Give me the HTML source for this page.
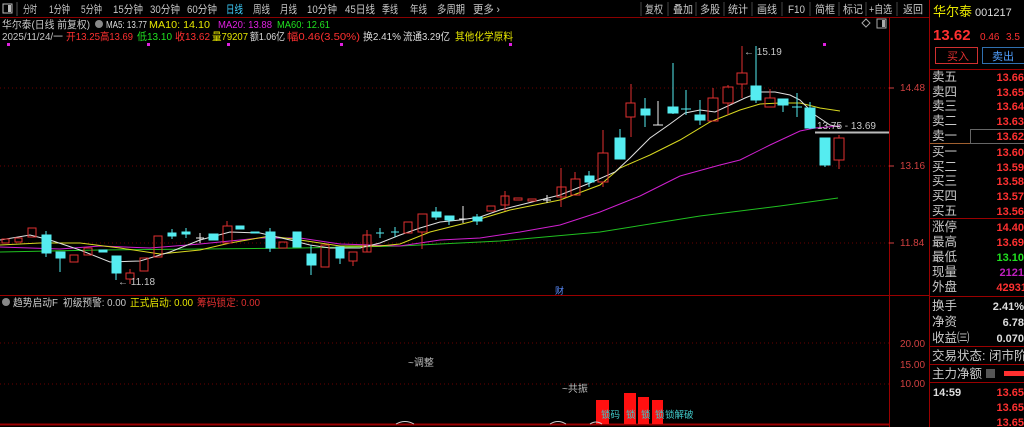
<!DOCTYPE html>
<html><head><meta charset="utf-8"><style>
html,body{margin:0;padding:0;background:#000;width:1024px;height:427px;overflow:hidden}
svg{display:block}
text{font-family:"Liberation Sans","Noto Sans CJK SC",sans-serif}
</style></head><body>
<svg width="1024" height="427" viewBox="0 0 1024 427" xmlns="http://www.w3.org/2000/svg">
<rect width="1024" height="427" fill="#000"/>
<line x1="0" y1="17.5" x2="930" y2="17.5" stroke="#8a0000"/>
<rect x="3" y="4" width="9" height="9" fill="none" stroke="#bbb"/><rect x="8" y="5" width="3" height="7" fill="#bbb"/>
<line x1="17" y1="2" x2="17" y2="16" stroke="#555"/>
<g font-size="11" fill="#c8c8c8" lengthAdjust="spacingAndGlyphs">
<text x="23" y="13" textLength="14" lengthAdjust="spacingAndGlyphs">分时</text>
<text x="49" y="13" textLength="21" lengthAdjust="spacingAndGlyphs">1分钟</text>
<text x="81" y="13" textLength="21" lengthAdjust="spacingAndGlyphs">5分钟</text>
<text x="113" y="13" textLength="30" lengthAdjust="spacingAndGlyphs">15分钟</text>
<text x="150" y="13" textLength="30" lengthAdjust="spacingAndGlyphs">30分钟</text>
<text x="187" y="13" textLength="30" lengthAdjust="spacingAndGlyphs">60分钟</text>
<text x="226" y="13" textLength="17" lengthAdjust="spacingAndGlyphs" fill="#3fd0ff">日线</text>
<text x="253" y="13" textLength="17" lengthAdjust="spacingAndGlyphs">周线</text>
<text x="280" y="13" textLength="17" lengthAdjust="spacingAndGlyphs">月线</text>
<text x="307" y="13" textLength="30" lengthAdjust="spacingAndGlyphs">10分钟</text>
<text x="345" y="13" textLength="30" lengthAdjust="spacingAndGlyphs">45日线</text>
<text x="382" y="13" textLength="16" lengthAdjust="spacingAndGlyphs">季线</text>
<text x="410" y="13" textLength="17" lengthAdjust="spacingAndGlyphs">年线</text>
<text x="437" y="13" textLength="28" lengthAdjust="spacingAndGlyphs">多周期</text>
<text x="473" y="13" textLength="27" lengthAdjust="spacingAndGlyphs">更多 ›</text>
<text x="645" y="13" textLength="18" lengthAdjust="spacingAndGlyphs">复权</text>
<text x="673" y="13" textLength="20" lengthAdjust="spacingAndGlyphs">叠加</text>
<text x="700" y="13" textLength="20" lengthAdjust="spacingAndGlyphs">多股</text>
<text x="728" y="13" textLength="20" lengthAdjust="spacingAndGlyphs">统计</text>
<text x="757" y="13" textLength="20" lengthAdjust="spacingAndGlyphs">画线</text>
<text x="788" y="13" textLength="17" lengthAdjust="spacingAndGlyphs">F10</text>
<text x="815" y="13" textLength="20" lengthAdjust="spacingAndGlyphs">简框</text>
<text x="843" y="13" textLength="20" lengthAdjust="spacingAndGlyphs">标记</text>
<text x="869" y="13" textLength="23" lengthAdjust="spacingAndGlyphs">+自选</text>
<text x="903" y="13" textLength="20" lengthAdjust="spacingAndGlyphs">返回</text>
</g>
<g stroke="#444"><line x1="641" y1="2" x2="641" y2="16"/><line x1="668" y1="2" x2="668" y2="16"/><line x1="696" y1="2" x2="696" y2="16"/><line x1="724" y1="2" x2="724" y2="16"/><line x1="752" y1="2" x2="752" y2="16"/><line x1="782" y1="2" x2="782" y2="16"/><line x1="810" y1="2" x2="810" y2="16"/><line x1="839" y1="2" x2="839" y2="16"/><line x1="866" y1="2" x2="866" y2="16"/><line x1="897" y1="2" x2="897" y2="16"/></g>
<g font-size="10.5">
<text x="2" y="28" fill="#c8c8c8" textLength="88" lengthAdjust="spacingAndGlyphs">华尔泰(日线 前复权)</text><circle cx="99" cy="24" r="4" fill="#888"/>
<text x="106" y="28" fill="#ddd" textLength="41" lengthAdjust="spacingAndGlyphs">MA5: 13.77</text>
<text x="149" y="28" fill="#e6e600" textLength="61" lengthAdjust="spacingAndGlyphs">MA10: 14.10</text>
<text x="218" y="28" fill="#e020e0" textLength="54" lengthAdjust="spacingAndGlyphs">MA20: 13.88</text>
<text x="277" y="28" fill="#20e020" textLength="53" lengthAdjust="spacingAndGlyphs">MA60: 12.61</text>
<text x="2" y="40" fill="#c8c8c8" textLength="61" lengthAdjust="spacingAndGlyphs">2025/11/24/一</text>
<text x="66" y="40" fill="#ff3030" textLength="34" lengthAdjust="spacingAndGlyphs">开13.25</text>
<text x="100" y="40" fill="#ff3030" textLength="33" lengthAdjust="spacingAndGlyphs">高13.69</text>
<text x="137" y="40" fill="#20e020" textLength="35" lengthAdjust="spacingAndGlyphs">低13.10</text>
<text x="175" y="40" fill="#ff3030" textLength="35" lengthAdjust="spacingAndGlyphs">收13.62</text>
<text x="212" y="40" fill="#e6e600" textLength="36" lengthAdjust="spacingAndGlyphs">量79207</text>
<text x="250" y="40" fill="#ddd" textLength="35" lengthAdjust="spacingAndGlyphs">额1.06亿</text>
<text x="287" y="40" fill="#ff3030" textLength="73" lengthAdjust="spacingAndGlyphs">幅0.46(3.50%)</text>
<text x="363" y="40" fill="#ddd" textLength="38" lengthAdjust="spacingAndGlyphs">换2.41%</text>
<text x="403" y="40" fill="#ddd" textLength="47" lengthAdjust="spacingAndGlyphs">流通3.29亿</text>
<text x="455" y="40" fill="#e6e600" textLength="58" lengthAdjust="spacingAndGlyphs">其他化学原料</text>
</g>
<path d="M866 19 l4 4 l-4 4 l-4 -4z" fill="none" stroke="#aaa"/><rect x="877" y="19" width="9" height="9" fill="none" stroke="#aaa"/><rect x="882" y="20" width="3" height="7" fill="#aaa"/>
<g fill="#e020e0"><rect x="7" y="43" width="3" height="3"/><rect x="147" y="43" width="3" height="3"/><rect x="227" y="43" width="3" height="3"/><rect x="340" y="43" width="3" height="3"/><rect x="509" y="43" width="3" height="3"/><rect x="823" y="43" width="3" height="3"/></g>
<g stroke="#6a0000" stroke-dasharray="1,3"><line x1="0" y1="88" x2="889" y2="88"/><line x1="0" y1="166" x2="889" y2="166"/><line x1="0" y1="243" x2="889" y2="243"/><line x1="0" y1="343" x2="889" y2="343"/><line x1="0" y1="384" x2="889" y2="384"/></g>
<line x1="889.5" y1="18" x2="889.5" y2="427" stroke="#9a0000"/>
<line x1="929.5" y1="0" x2="929.5" y2="427" stroke="#9a0000"/>
<line x1="0" y1="295.5" x2="929" y2="295.5" stroke="#9a0000"/>
<line x1="0" y1="424.5" x2="889" y2="424.5" stroke="#9a0000" stroke-width="2"/>
<g font-size="10" fill="#d04040"><text x="900" y="91">14.48</text><text x="900" y="169">13.16</text><text x="900" y="246">11.84</text><text x="900" y="347">20.00</text><text x="900" y="368">15.00</text><text x="900" y="387">10.00</text></g>
<g stroke="#d04040"><line x1="889" y1="88" x2="894" y2="88"/><line x1="889" y1="166" x2="894" y2="166"/><line x1="889" y1="243" x2="894" y2="243"/></g>
<polyline fill="none" stroke="#20c020" points="0,252 100,250 200,249 300,248 400,246 500,241 600,232 700,216 780,206 838,198"/>
<polyline fill="none" stroke="#d020d0" points="0,247 60,249 100,246 150,248 200,244 260,238 300,238 340,244 400,246 440,240 480,238 520,232 560,225 600,212 640,196 680,176 720,165 740,160 770,145 800,131 815,128 840,126"/>
<polyline fill="none" stroke="#d8d820" points="0,245 40,243 80,243 120,248 160,254 200,250 230,243 270,236 300,240 340,246 380,246 400,244 430,232 470,222 510,210 560,200 600,185 620,168 650,155 680,140 710,122 740,110 760,104 780,103 800,103 820,108 840,111"/>
<polyline fill="none" stroke="#e0e0e0" points="0,240 30,235 50,240 80,250 110,262 140,261 170,252 200,240 230,232 260,233 290,240 310,245 330,248 360,248 380,243 400,235 420,228 440,222 460,220 480,217 500,210 520,205 540,200 560,195 590,183 615,172 630,158 650,138 670,124 685,113 700,110 715,112 730,105 745,98 760,92 775,92 790,95 800,100 815,115 830,125 840,127"/>
<g fill="none" stroke="#e03030">
<rect x="2" y="239" width="7" height="4"/><rect x="15" y="238" width="7" height="4"/><rect x="28" y="228" width="8" height="9"/>
<rect x="70" y="255" width="8" height="7"/><rect x="84" y="248" width="8" height="7"/>
<rect x="126" y="273" width="8" height="6"/><line x1="130" y1="269" x2="130" y2="273"/><line x1="130" y1="279" x2="130" y2="284"/>
<rect x="140" y="258" width="8" height="13"/><rect x="154" y="236" width="8" height="21"/>
<rect x="223" y="226" width="9" height="17"/><line x1="227" y1="221" x2="227" y2="226"/>
<rect x="279" y="242" width="8" height="6"/>
<rect x="321" y="245" width="8" height="22"/><rect x="349" y="252" width="8" height="9"/><line x1="353" y1="261" x2="353" y2="266"/>
<rect x="363" y="235" width="8" height="17"/><line x1="367" y1="230" x2="367" y2="252"/>
<rect x="404" y="222" width="8" height="11"/><rect x="418" y="214" width="9" height="18"/><line x1="422" y1="232" x2="422" y2="249"/>
<rect x="487" y="206" width="8" height="5"/><rect x="501" y="196" width="8" height="9"/><line x1="505" y1="191" x2="505" y2="211"/>
<rect x="514" y="198" width="8" height="2"/><rect x="528" y="199" width="8" height="2"/>
<rect x="557" y="187" width="9" height="10"/><line x1="561" y1="168" x2="561" y2="207"/>
<rect x="571" y="179" width="9" height="16"/><line x1="575" y1="172" x2="575" y2="179"/>
<rect x="598" y="153" width="10" height="29"/><line x1="603" y1="130" x2="603" y2="153"/><line x1="603" y1="182" x2="603" y2="187"/>
<rect x="626" y="103" width="9" height="14"/><line x1="631" y1="84" x2="631" y2="103"/><line x1="631" y1="117" x2="631" y2="137"/>
<rect x="708" y="98" width="10" height="23"/><line x1="713" y1="88" x2="713" y2="98"/>
<rect x="723" y="87" width="10" height="16"/><line x1="728" y1="85" x2="728" y2="87"/><line x1="728" y1="103" x2="728" y2="115"/>
<rect x="737" y="73" width="10" height="11"/><line x1="742" y1="46" x2="742" y2="73"/><line x1="742" y1="84" x2="742" y2="98"/>
<rect x="765" y="98" width="10" height="9"/><line x1="770" y1="89" x2="770" y2="98"/>
<rect x="834" y="138" width="10" height="22"/><line x1="839" y1="135" x2="839" y2="138"/><line x1="839" y1="160" x2="839" y2="169"/>
</g>
<g fill="#55ecf0" stroke="#55ecf0">
<rect x="42" y="235" width="9" height="18"/><line x1="46" y1="231" x2="46" y2="257"/>
<rect x="56" y="252" width="9" height="6"/><line x1="60" y1="258" x2="60" y2="272"/>
<rect x="99" y="250" width="8" height="2"/>
<rect x="112" y="256" width="9" height="17"/><line x1="116" y1="273" x2="116" y2="280"/>
<rect x="168" y="233" width="8" height="3"/><line x1="172" y1="229" x2="172" y2="239"/>
<rect x="182" y="232" width="8" height="2"/><line x1="186" y1="228" x2="186" y2="238"/>
<rect x="209" y="234" width="9" height="6"/>
<rect x="236" y="226" width="8" height="3"/>
<rect x="251" y="232" width="8" height="1"/>
<rect x="266" y="232" width="9" height="16"/><line x1="270" y1="228" x2="270" y2="252"/>
<rect x="293" y="232" width="8" height="15"/>
<rect x="307" y="254" width="9" height="11"/><line x1="311" y1="245" x2="311" y2="275"/>
<rect x="336" y="247" width="8" height="11"/><line x1="340" y1="258" x2="340" y2="264"/>
<line x1="376" y1="233" x2="384" y2="233"/><line x1="380" y1="228" x2="380" y2="238"/>
<line x1="391" y1="232" x2="399" y2="232"/><line x1="395" y1="227" x2="395" y2="237"/>
<rect x="432" y="212" width="9" height="5"/><line x1="436" y1="207" x2="436" y2="220"/>
<rect x="445" y="216" width="9" height="4"/><line x1="449" y1="220" x2="449" y2="225"/>
<rect x="473" y="217" width="9" height="4"/><line x1="477" y1="214" x2="477" y2="225"/>
<rect x="585" y="176" width="9" height="6"/><line x1="589" y1="171" x2="589" y2="187"/>
<rect x="615" y="138" width="10" height="21"/><line x1="620" y1="129" x2="620" y2="138"/>
<rect x="641" y="109" width="9" height="6"/><line x1="645" y1="98" x2="645" y2="127"/>
<rect x="668" y="107" width="10" height="6"/><line x1="673" y1="63" x2="673" y2="114"/>
<line x1="681" y1="109" x2="691" y2="109"/><line x1="686" y1="90" x2="686" y2="115"/>
<rect x="695" y="115" width="10" height="5"/><line x1="700" y1="100" x2="700" y2="125"/>
<rect x="751" y="86" width="10" height="14"/><line x1="756" y1="46" x2="756" y2="103"/>
<rect x="778" y="99" width="10" height="6"/><line x1="783" y1="105" x2="783" y2="112"/>
<line x1="792" y1="107" x2="802" y2="107"/><line x1="797" y1="93" x2="797" y2="117"/>
<rect x="805" y="108" width="10" height="20"/><line x1="810" y1="102" x2="810" y2="129"/>
<rect x="820" y="138" width="10" height="27"/><line x1="825" y1="165" x2="825" y2="167"/>
</g>
<g stroke="#eee"><line x1="196" y1="238" x2="204" y2="238"/><line x1="200" y1="233" x2="200" y2="243"/>
<line x1="459" y1="219" x2="467" y2="219"/><line x1="463" y1="206" x2="463" y2="223"/>
<line x1="543" y1="200" x2="551" y2="200"/><line x1="547" y1="195" x2="547" y2="203"/>
<line x1="653" y1="125" x2="663" y2="125"/><line x1="658" y1="101" x2="658" y2="125"/></g>
<g font-size="10" fill="#c8c8c8"><text x="118" y="285">← 11.18</text><text x="744" y="55">← 15.19</text><text x="817" y="129">13.75 - 13.69</text></g>
<line x1="815" y1="132.5" x2="889" y2="132.5" stroke="#bbb" stroke-width="2"/>
<text x="555" y="294" font-size="9" fill="#5a8cff">财</text>
<circle cx="6" cy="302" r="4" fill="#888"/>
<g font-size="10.5">
<text x="13" y="306" fill="#c8c8c8" textLength="45" lengthAdjust="spacingAndGlyphs">趋势启动F</text>
<text x="63" y="306" fill="#c8c8c8" textLength="63" lengthAdjust="spacingAndGlyphs">初级预警: 0.00</text>
<text x="130" y="306" fill="#e6e600" textLength="63" lengthAdjust="spacingAndGlyphs">正式启动: 0.00</text>
<text x="197" y="306" fill="#e03030" textLength="63" lengthAdjust="spacingAndGlyphs">筹码锁定: 0.00</text>
</g>
<g font-size="10" fill="#bbb"><text x="408" y="366">~调整</text><text x="562" y="392">~共振</text></g>
<g fill="#ff1010"><rect x="596" y="400" width="13" height="24"/><rect x="624" y="393" width="12" height="31"/><rect x="638" y="397" width="11" height="27"/><rect x="652" y="400" width="11" height="24"/></g>
<g font-size="9.5" fill="#40c8c8"><text x="601" y="418">锁码</text><text x="626" y="418">锁</text><text x="641" y="418">锁</text><text x="655" y="418">锁</text><text x="665" y="418">锁解破</text></g>
<g fill="none" stroke="#ccc"><path d="M396 424 q9 -5 18 0"/><path d="M550 424 q8 -5 16 0"/><path d="M590 424 q6 -4 12 0"/></g>
<text x="933" y="16" font-size="13" fill="#e6e600">华尔泰</text><text x="975" y="16" font-size="11" fill="#ddd">001217</text>
<text x="933" y="40" font-size="15" font-weight="bold" fill="#ff3030">13.62</text><text x="980" y="40" font-size="10" fill="#ff3030">0.46</text><text x="1006" y="40" font-size="10" fill="#ff3030">3.5</text>
<rect x="935.5" y="47.5" width="42" height="16" fill="none" stroke="#d03030"/><text x="947" y="60" font-size="11" fill="#e03030">买入</text>
<rect x="982.5" y="47.5" width="42" height="16" fill="none" stroke="#3070b0"/><text x="992" y="60" font-size="11" fill="#50a0ff">卖出</text>
<g stroke="#9a0000"><line x1="930" y1="69.5" x2="1024" y2="69.5"/><line x1="930" y1="218.5" x2="1024" y2="218.5"/><line x1="930" y1="296.5" x2="1024" y2="296.5"/><line x1="930" y1="346.5" x2="1024" y2="346.5"/><line x1="930" y1="364.5" x2="1024" y2="364.5"/><line x1="930" y1="382.5" x2="1024" y2="382.5"/></g>
<line x1="930" y1="143.5" x2="1024" y2="143.5" stroke="#a06030"/>
<rect x="970.5" y="129.5" width="54" height="14" fill="none" stroke="#666"/>
<g font-size="12.5" fill="#c8c8c8">
<text x="932" y="81">卖五</text><text x="932" y="96">卖四</text><text x="932" y="110">卖三</text><text x="932" y="125">卖二</text><text x="932" y="140">卖一</text>
<text x="932" y="156">买一</text><text x="932" y="171">买二</text><text x="932" y="185">买三</text><text x="932" y="200">买四</text><text x="932" y="215">买五</text>
<text x="932" y="231">涨停</text><text x="932" y="246">最高</text><text x="932" y="261">最低</text><text x="932" y="276">现量</text><text x="932" y="291">外盘</text>
<text x="932" y="310">换手</text><text x="932" y="326">净资</text><text x="932" y="342">收益㈢</text><text x="932" y="360">交易状态: 闭市阶</text><text x="932" y="378">主力净额</text>
</g>
<rect x="986" y="369" width="9" height="9" fill="#555"/><rect x="1004" y="371" width="20" height="5" fill="#ff3030"/>
<g font-size="11" font-weight="bold" fill="#ff3030" text-anchor="end">
<text x="1024" y="81">13.66</text><text x="1024" y="96">13.65</text><text x="1024" y="110">13.64</text><text x="1024" y="125">13.63</text><text x="1024" y="140">13.62</text>
<text x="1024" y="156">13.60</text><text x="1024" y="171">13.59</text><text x="1024" y="185">13.58</text><text x="1024" y="200">13.57</text><text x="1024" y="215">13.56</text>
<text x="1024" y="231">14.40</text><text x="1024" y="246">13.69</text><text x="1024" y="261" fill="#20e020">13.10</text><text x="1024" y="276" fill="#c020c0">2121</text><text x="1027" y="291">42931</text>
<text x="1024" y="310" fill="#ddd">2.41%</text><text x="1024" y="326" fill="#ddd">6.78</text><text x="1024" y="342" fill="#ddd">0.070</text>
<text x="1024" y="396">13.65</text><text x="1024" y="411">13.65</text><text x="1024" y="426">13.65</text>
</g>
<text x="933" y="396" font-size="11" font-weight="bold" fill="#ddd">14:59</text>
</svg>
</body></html>
